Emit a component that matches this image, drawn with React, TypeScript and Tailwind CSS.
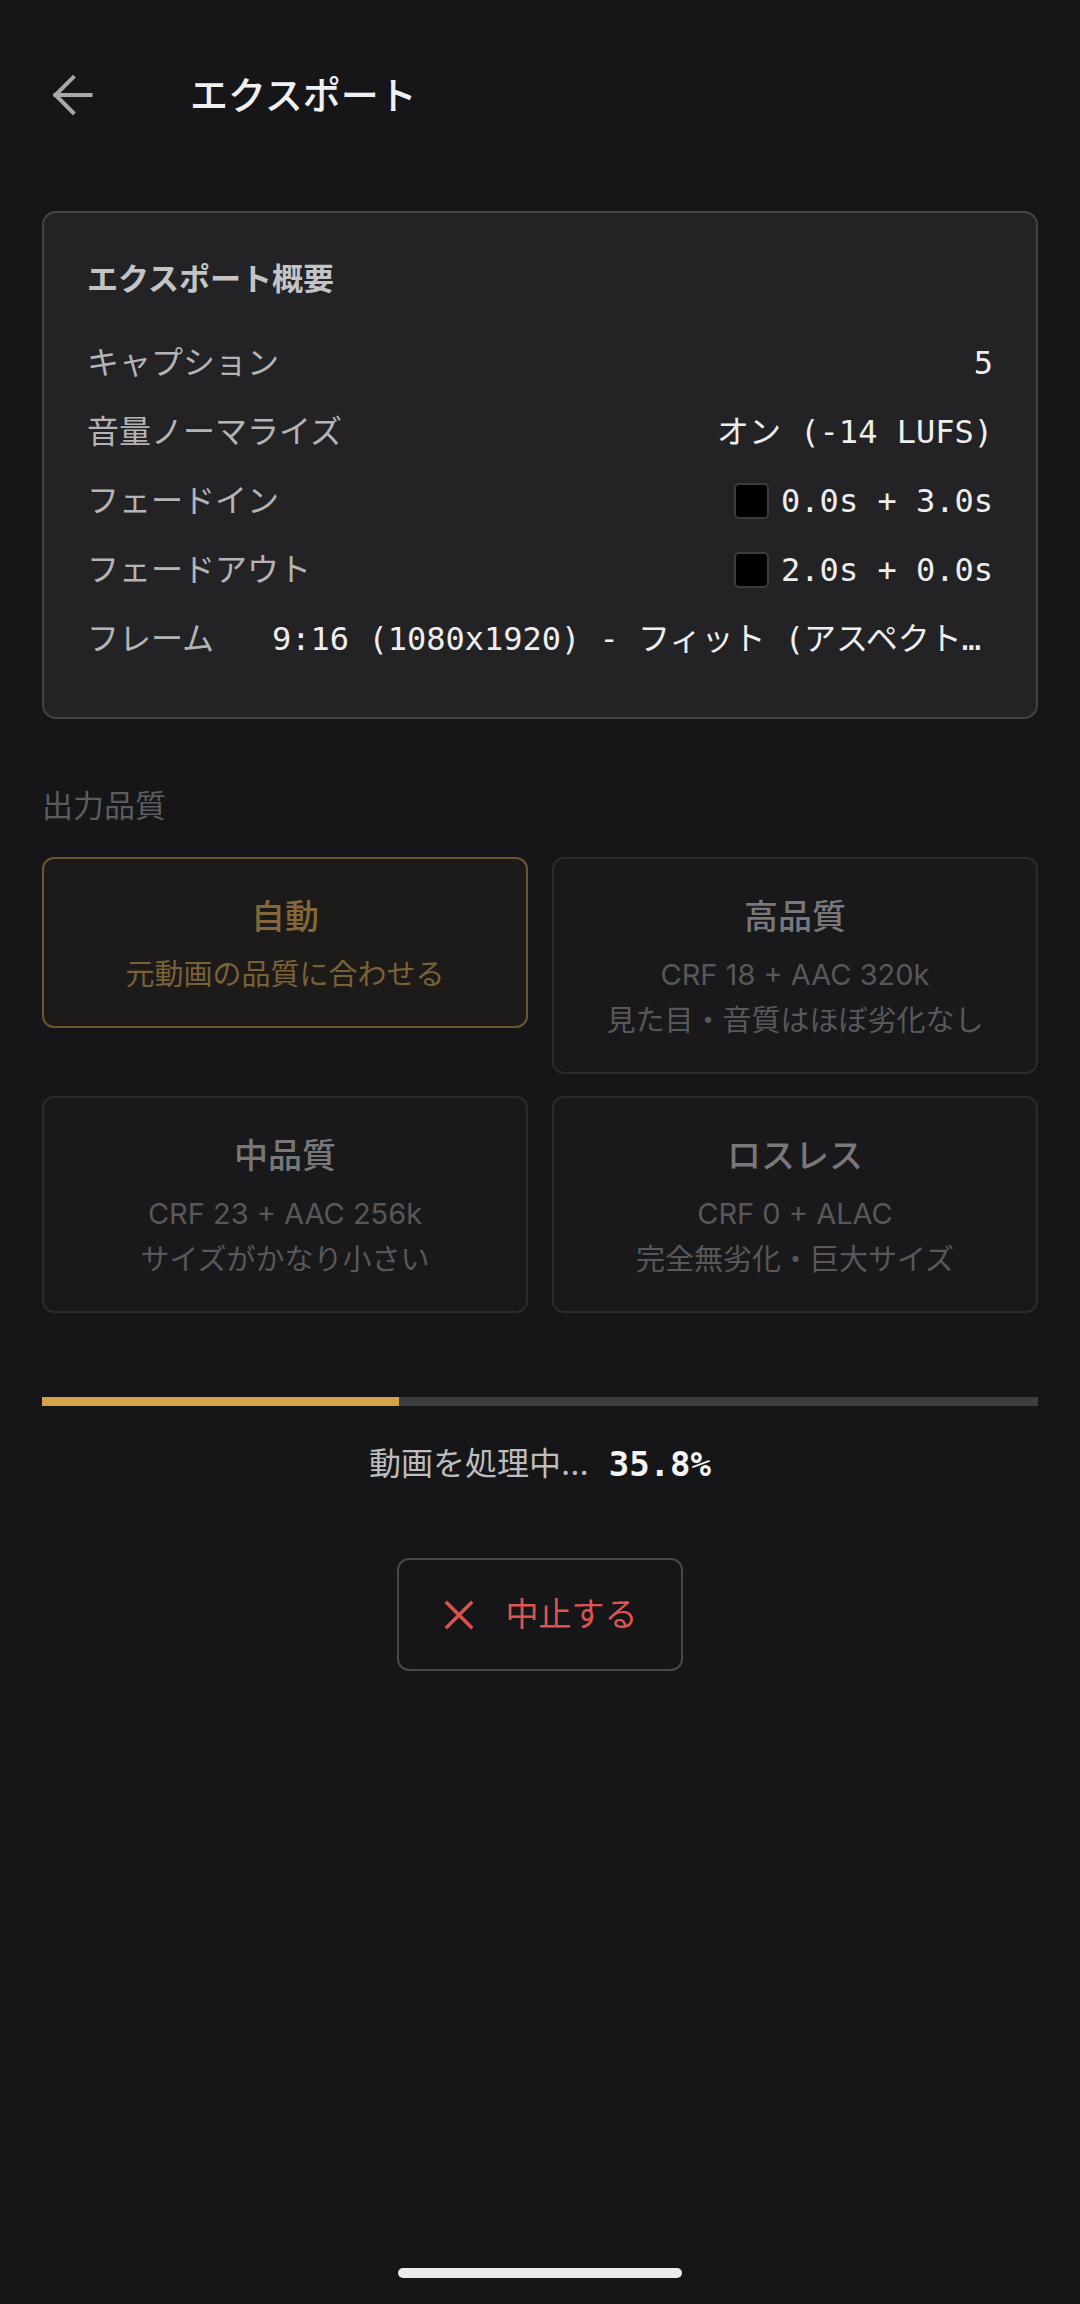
import React from "react";

const sans = { fontFamily: '"Inter", "Noto Sans CJK JP", sans-serif' };
const mono = { fontFamily: '"DejaVu Sans Mono", "Noto Sans CJK JP", monospace' };

function Check() {
  return <span className="inline-block w-[35px] h-[36px] rounded-[5px] bg-black border-2 border-[#3c3c3e] mr-[12px] shrink-0" />;
}

function Row({ label, children }: { label: string; children: React.ReactNode }) {
  return (
    <div className="h-[69px] flex items-center justify-between">
      <span className="text-[32px] text-[#b4b4b6] shrink-0">{label}</span>
      {children}
    </div>
  );
}

function QCard({ title, lines, selected }: { title: string; lines: string[]; selected?: boolean }) {
  return (
    <div
      className={
        "rounded-[12px] border-2 pt-[34px] pb-[28px] flex flex-col items-center text-center " +
        (selected ? "border-[#6b5531] bg-[#1c1b1a]" : "border-[#2b2b2d] bg-[#19191b]")
      }
    >
      <div className={"text-[34px] leading-[48px] font-medium " + (selected ? "text-[#85683a]" : "text-[#78787a]")}>{title}</div>
      <div className="mt-[11px]">
        {lines.map((l) => (
          <div key={l} className={"text-[29px] leading-[46px] " + (selected ? "text-[#7a6138]" : "text-[#58585a]")}>
            {l}
          </div>
        ))}
      </div>
    </div>
  );
}

export default function App() {
  return (
    <div className="w-[1080px] min-h-[2304px] bg-[#161618] flex flex-col" style={sans}>
      <header className="h-[190px] flex items-center pl-[43px]">
        <svg width="60" height="60" viewBox="0 0 24 24" fill="none" stroke="#a8a8aa" strokeWidth="1.6" strokeLinecap="square" strokeLinejoin="miter">
          <path d="M12 19l-7-7 7-7" />
          <path d="M19 12H5" />
        </svg>
        <h1 className="ml-[87px] text-[38px] font-medium text-[#f0f0f2]">エクスポート</h1>
      </header>

      <main className="px-[42px] pt-[21px] flex flex-col">
        <section className="rounded-[14px] border-2 border-[#444446] bg-[#232325] px-[43px] pt-[44px] pb-[44px]">
          <div className="h-[44px] leading-[44px] text-[31px] font-semibold text-[#c4c4c6] mb-[27px]">エクスポート概要</div>
          <Row label="キャプション">
            <span className="text-[32px] text-[#eeeeee]" style={mono}>5</span>
          </Row>
          <Row label="音量ノーマライズ">
            <span className="text-[32px] text-[#eeeeee] whitespace-pre" style={mono}>オン (-14 LUFS)</span>
          </Row>
          <Row label="フェードイン">
            <span className="flex items-center">
              <Check />
              <span className="text-[32px] text-[#eeeeee] whitespace-pre" style={mono}>0.0s + 3.0s</span>
            </span>
          </Row>
          <Row label="フェードアウト">
            <span className="flex items-center">
              <Check />
              <span className="text-[32px] text-[#eeeeee] whitespace-pre" style={mono}>2.0s + 0.0s</span>
            </span>
          </Row>
          <Row label="フレーム">
            <span className="ml-[58px] min-w-0 flex-1 truncate text-right text-[32px] text-[#eeeeee]" style={mono}>
              9:16 (1080x1920) - フィット (アスペクト比維持)
            </span>
          </Row>
        </section>

        <div className="mt-[65px] h-[44px] leading-[44px] text-[31px] text-[#5c5c5e]">出力品質</div>

        <div className="mt-[29px] grid grid-cols-2 gap-x-[24px] gap-y-[22px] items-start">
          <QCard title="自動" lines={["元動画の品質に合わせる"]} selected />
          <QCard title="高品質" lines={["CRF 18 + AAC 320k", "見た目・音質はほぼ劣化なし"]} />
          <QCard title="中品質" lines={["CRF 23 + AAC 256k", "サイズがかなり小さい"]} />
          <QCard title="ロスレス" lines={["CRF 0 + ALAC", "完全無劣化・巨大サイズ"]} />
        </div>

        <div className="mt-[84px] h-[9px] bg-[#3e3e41] w-full">
          <div className="h-full bg-[#d4a34a]" style={{ width: "35.8%" }} />
        </div>

        <div className="mt-[36px] h-[44px] flex items-center justify-center">
          <span className="text-[32px] text-[#bdbdbf]">動画を処理中...</span>
          <span className="ml-[20px] text-[34px] font-semibold text-[#f4f4f4]" style={mono}>35.8%</span>
        </div>

        <div className="mt-[72px] flex justify-center">
          <button className="w-[286px] h-[113px] rounded-[12px] border-2 border-[#48484a] flex items-center justify-center">
            <svg width="32" height="32" viewBox="0 0 24 24" fill="none" stroke="#d9534f" strokeWidth="2.6" strokeLinecap="square">
              <path d="M3 3l18 18M21 3L3 21" />
            </svg>
            <span className="ml-[31px] text-[33px] text-[#de5450]">中止する</span>
          </button>
        </div>
      </main>

      <div className="flex-1" />
      <div className="flex justify-center pb-[26px]">
        <div className="w-[284px] h-[10px] rounded-full bg-[#ececec]" />
      </div>
    </div>
  );
}
